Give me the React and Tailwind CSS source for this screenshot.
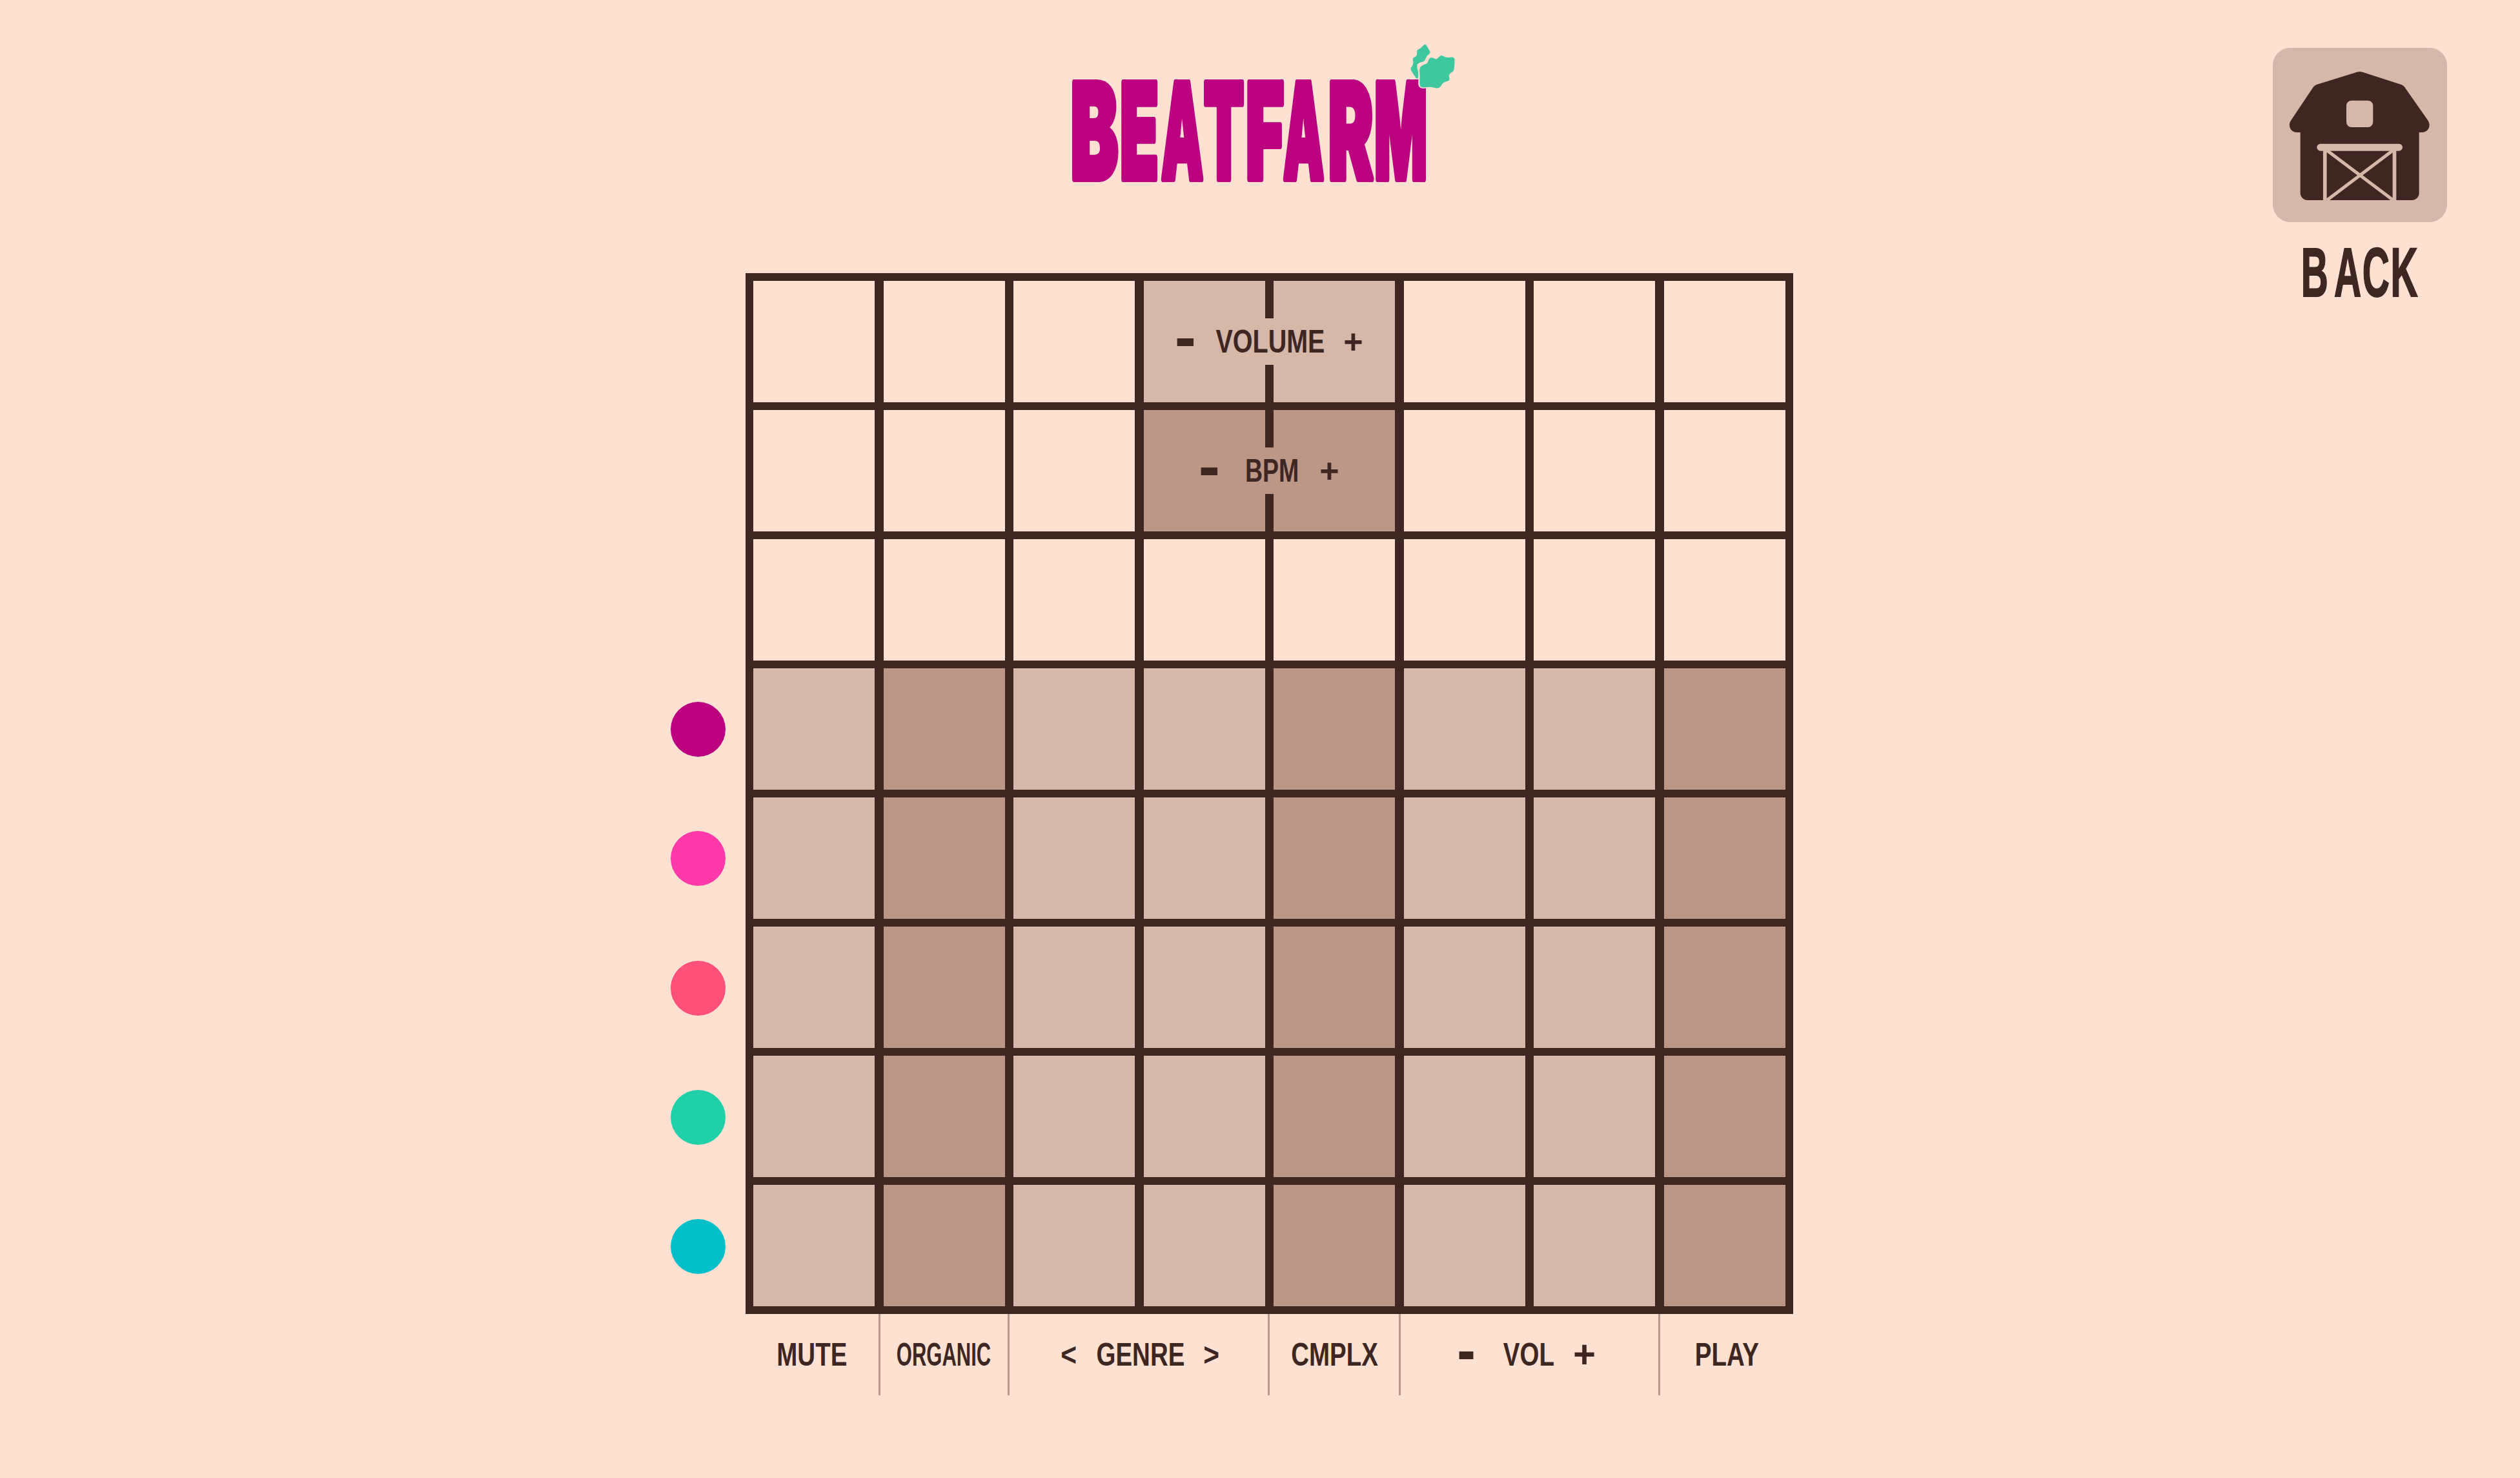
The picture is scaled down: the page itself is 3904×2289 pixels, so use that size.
const DARK = "#3e2723";

// cell shade per column on the lower five rows
const darkColumns = [1, 4, 7];
const dots = ["bg-[#bb0080]", "bg-[#ff3aa8]", "bg-[#ff5079]", "bg-[#1fd0a9]", "bg-[#00bfc8]"];

// smooth closed outline through a list of points
function blob(points) {
  const mid = (a, b) => [(a[0] + b[0]) / 2, (a[1] + b[1]) / 2];
  let d = `M${mid(points[points.length - 1], points[0]).join(" ")}`;
  points.forEach((p, i) => {
    const next = points[(i + 1) % points.length];
    d += `Q${p.join(" ")} ${mid(p, next).join(" ")}`;
  });
  return d + "Z";
}

const bigLeaf = [[1304,290],[1307,235],[1304,195],[1318,180],[1332,176],[1338,147],[1352,148],[1363,158],[1377,133],[1394,149],[1424,143],[1423,178],[1421,212],[1402,224],[1409,256],[1385,260],[1372,294],[1340,282]];
const smallLeaf = [[1298,254],[1282,218],[1273,200],[1286,176],[1280,150],[1298,140],[1295,112],[1310,105],[1324,80],[1334,105],[1344,126],[1328,140],[1323,166],[1302,171],[1295,186],[1303,225]];

function Leaves() {
  return (
    <svg
      className="absolute left-[523px] top-[-54px] w-[73.5px] h-[77px]"
      viewBox="1270 78 160 231"
      preserveAspectRatio="none"
    >
      <path d={blob(smallLeaf)} fill="#3dc8a0" />
      <path d={blob(bigLeaf)} fill="#3dc8a0" stroke="#ffe1d1" strokeWidth="9" paintOrder="stroke" />
    </svg>
  );
}

// letter, centre x, horizontal squeeze
const logoLetters = [
  ["B", 35.5, 0.54],
  ["E", 105, 0.477],
  ["A", 171.5, 0.4],
  ["T", 236, 0.445],
  ["F", 299.5, 0.495],
  ["A", 359.5, 0.388],
  ["R", 432.5, 0.508],
  ["M", 510, 0.417],
];

function Logo() {
  return (
    <div className="relative ml-[1660px] mt-[120px] h-[162px] w-[549px]">
      <svg viewBox="0 0 549 162" className="h-[162px] w-[549px] overflow-visible">
        {logoLetters.map(([letter, x, squeeze], i) => (
          <text
            key={i}
            transform={`translate(${x} 157) scale(${squeeze} 1)`}
            textAnchor="middle"
            fill="#bb0080"
            stroke="#bb0080"
            strokeWidth="10"
            strokeLinejoin="round"
            className="font-['Inter',sans-serif] text-[205px] font-black"
          >
            {letter}
          </text>
        ))}
      </svg>
      <Leaves />
    </div>
  );
}

function Barn() {
  return (
    <svg viewBox="0 0 270 270" className="w-[270px] h-[270px]">
      <path
        d="M131 37.5q3.700-1.200 7.400 0L199 57q3.500 1.200 5.500 4.200L240 112c6 8.500 1 19-9 19h-4.300v94c0 6-5 11-11 11H53.700c-6 0-11-5-11-11v-94h-5.200c-10 0-15-10.500-9-19L62.500 61.200q2-3 5.500-4.200Z"
        fill={DARK}
      />
      <rect x="114" y="81.700" width="41.300" height="41.300" rx="8" fill="#d5b8aa" />
      <rect x="68.300" y="148.700" width="132.700" height="11" rx="5.500" fill="#d5b8aa" />
      <path d="M80.800 158v78M188.500 158v78" stroke="#d5b8aa" strokeWidth="5.700" fill="none" />
      <path d="M84 159L186.500 236M186 159L84 236" stroke="#d5b8aa" strokeWidth="5" fill="none" />
    </svg>
  );
}

function BackButton() {
  return (
    <div className="ml-auto mr-[113px] mt-[74px] flex flex-col items-center">
      <button className="h-[270px] w-[270px] rounded-[27px] bg-[#d5b8aa]">
        <Barn />
      </button>
      <span className="mt-[32px] flex h-[92px] w-[183px] items-center justify-center">
        <span className="scale-x-[0.54] whitespace-nowrap font-['Liberation_Sans',sans-serif] text-[108px] leading-none font-bold tracking-[3px] text-[#3e2723] [-webkit-text-stroke:2px_#3e2723]">
          B<span className="ml-[14px]">ACK</span>
        </span>
      </span>
    </div>
  );
}

// condensed word: fixed box, glyphs squeezed to fit it
function Word({ children, width, squeeze = "scale-x-[0.77]" }) {
  return (
    <span className={`flex shrink-0 justify-center whitespace-nowrap ${width}`}>
      <span className={squeeze}>{children}</span>
    </span>
  );
}

// hyphen drawn large so it gets the heavy bar of the original
function Minus({ size = "text-[100px] scale-x-[1]" }) {
  return (
    <span className="flex w-[25px] shrink-0 justify-center">
      <span className={`${size} -translate-y-[8px] leading-none`}>-</span>
    </span>
  );
}

function Plus({ size = "text-[52px]", width = "w-[27px]" }) {
  return (
    <span className={`flex shrink-0 justify-center ${width}`}>
      <span className={size}>+</span>
    </span>
  );
}

function GridLabel({ children, row, shade }) {
  return (
    <div
      className={`absolute left-1/2 -translate-x-1/2 flex h-[72px] w-[120px] items-center justify-center ${row} ${shade}`}
    >
      <span className="absolute flex items-center whitespace-nowrap">{children}</span>
    </div>
  );
}

function Grid() {
  const cells = [];
  for (let row = 0; row < 8; row++) {
    for (let col = 0; col < 8; col++) {
      let shade = "bg-[#ffe1d1]";
      if (row >= 3) shade = darkColumns.includes(col) ? "bg-[#bc9687]" : "bg-[#d5b8aa]";
      else if (row === 0 && (col === 3 || col === 4)) shade = "bg-[#d5b8aa]";
      else if (row === 1 && (col === 3 || col === 4)) shade = "bg-[#bc9687]";
      cells.push(<div key={`${row}-${col}`} className={shade} />);
    }
  }

  return (
    <div className="relative grid w-[1623px] grid-cols-[repeat(8,188px)] grid-rows-[repeat(8,188px)] gap-x-[13.5px] gap-y-[12px] border-[12px] border-[#3e2723] bg-[#3e2723]">
      {cells}
      <GridLabel row="top-[58px]" shade="bg-[#d5b8aa]">
        <Minus />
        <span className="ml-[35px]"><Word width="w-[167px]" squeeze="scale-x-[0.79]">VOLUME</Word></span>
        <span className="ml-[32px]"><Plus /></span>
      </GridLabel>
      <GridLabel row="top-[258px]" shade="bg-[#bc9687]">
        <Minus />
        <span className="ml-[43px]"><Word width="w-[84px]" squeeze="scale-x-[0.75]">BPM</Word></span>
        <span className="ml-[33px]"><Plus /></span>
      </GridLabel>
    </div>
  );
}

const footerCell = "flex h-[126px] shrink-0 items-center justify-center border-r-[3px] border-[#bc9687]";

function Footer() {
  return (
    <div className="flex w-[1623px]">
      <div className={`${footerCell} w-[208.500px]`}>
        <Word width="w-[107px]">MUTE</Word>
      </div>
      <div className={`${footerCell} w-[200px]`}>
        <Word width="w-[146px]" squeeze="scale-x-[0.62]">ORGANIC</Word>
      </div>
      <div className={`${footerCell} w-[403.500px] gap-[32px] pl-[3px]`}>
        <Word width="w-[22px]" squeeze="scale-x-[0.85]">{"<"}</Word>
        <Word width="w-[136px]">GENRE</Word>
        <Word width="w-[20px]" squeeze="scale-x-[0.85]">{">"}</Word>
      </div>
      <div className={`${footerCell} w-[202.500px]`}>
        <Word width="w-[136px]">CMPLX</Word>
      </div>
      <div className={`${footerCell} w-[402px] pr-[9px]`}>
        <Minus size="text-[100px] scale-x-[0.86]" />
        <span className="ml-[44px]"><Word width="w-[80px]">VOL</Word></span>
        <span className="ml-[30px]"><Plus size="text-[60px]" width="w-[32px]" /></span>
      </div>
      <div className="flex h-[126px] w-[206px] shrink-0 items-center justify-center">
        <Word width="w-[104px]">PLAY</Word>
      </div>
    </div>
  );
}

export default function App() {
  return (
    <div className="h-[2289px] w-[3904px] overflow-hidden bg-[#ffe1d1] font-['Liberation_Sans',Arial,sans-serif] text-[50px] leading-none font-bold text-[#3e2723]">
      <header className="flex h-[423.300px] items-start">
        <Logo />
        <BackButton />
      </header>

      <main className="ml-[1039.300px] flex">
        <div className="mt-[664px] flex flex-col gap-[115.200px]">
          {dots.map((dot) => (
            <span key={dot} className={`h-[85px] w-[85px] rounded-full ${dot}`} />
          ))}
        </div>
        <div className="ml-[31.200px]">
          <Grid />
          <Footer />
        </div>
      </main>
    </div>
  );
}
